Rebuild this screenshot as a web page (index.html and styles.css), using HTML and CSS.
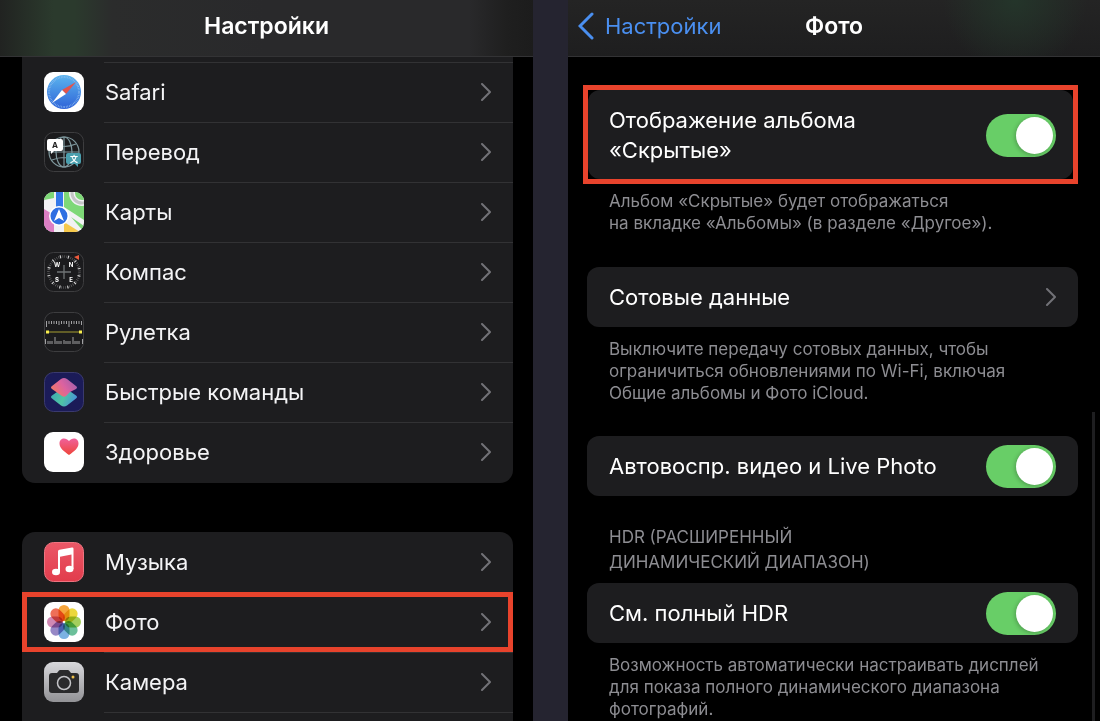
FILE: index.html
```
<!DOCTYPE html>
<html lang="ru">
<head>
    <meta charset="UTF-8">
    <meta name="viewport" content="width=device-width, initial-scale=1.0">
    <title>Настройки</title>
    <link rel="stylesheet" href="styles.css">
</head>
<body>

<section class="screen">
    <header class="navbar navbar-main">
        <h1>Настройки</h1>
    </header>
    <main class="content">
        <ul class="list list-cut">
            <li><a class="row" href="#">
                <svg class="icon" viewBox="0 0 40 40">
                    <defs><linearGradient id="safari" x2="0" y2="1"><stop stop-color="#5bb5ee"/><stop offset="1" stop-color="#2f63d8"/></linearGradient></defs>
                    <rect width="40" height="40" rx="9" fill="#fff"/>
                    <circle cx="20" cy="20" r="17" fill="url(#safari)"/>
                    <circle cx="20" cy="20" r="15" fill="none" stroke="#8fbdf0" stroke-width="2" stroke-dasharray="0.6 1"/>
                    <path d="M32 10 18 18 22 22z" fill="#e2544c"/>
                    <path d="M8 31 18 18 22 22z" fill="#fff"/>
                </svg>
                <span class="label">Safari</span>
                <svg class="chevron" viewBox="0 0 10 18"><path d="M1 1l8 8-8 8"/></svg>
            </a></li>
            <li><a class="row" href="#">
                <svg class="icon" viewBox="0 0 40 40">
                    <rect x="0.5" y="0.5" width="39" height="39" rx="9" fill="#1b1b1d" stroke="#3d3d3f"/>
                    <g fill="none" stroke="#7f989e" stroke-width="1.2">
                        <circle cx="20" cy="20" r="15"/>
                        <ellipse cx="20" cy="20" rx="8" ry="15"/>
                        <path d="M20 5v30M5 20h30M8 12q12 5 24 0M8 28q12-5 24 0"/>
                    </g>
                    <path d="M5 7h12a2 2 0 0 1 2 2v8a2 2 0 0 1-2 2h-7l-3 3v-3H5a2 2 0 0 1-2-2V9a2 2 0 0 1 2-2z" fill="#fff"/>
                    <text class="mark mark-dark" x="11" y="16">A</text>
                    <path d="M24 21h11a2 2 0 0 1 2 2v7a2 2 0 0 1-2 2h-1v3l-3-3h-7a2 2 0 0 1-2-2v-7a2 2 0 0 1 2-2z" fill="#4a9fae"/>
                    <text class="mark" x="30" y="30">文</text>
                </svg>
                <span class="label">Перевод</span>
                <svg class="chevron" viewBox="0 0 10 18"><path d="M1 1l8 8-8 8"/></svg>
            </a></li>
            <li><a class="row" href="#">
                <svg class="icon" viewBox="0 0 40 40">
                    <defs><clipPath id="tile"><rect width="40" height="40" rx="9"/></clipPath></defs>
                    <g clip-path="url(#tile)">
                        <rect width="40" height="40" fill="#f2f2f4"/>
                        <path d="M0 0h10v6L0 8z" fill="#7ed877"/>
                        <path d="M20 0h20v28L20 15z" fill="#7ed877"/>
                        <circle cx="38" cy="1" r="10" fill="none" stroke="#f2f2f4" stroke-width="6"/>
                        <circle cx="38" cy="1" r="10" fill="none" stroke="#c4c6c6" stroke-width="3"/>
                        <path d="M0 17l10 6v17H0z" fill="#dc7fc4"/>
                        <path d="M20 30l16 10H20z" fill="#f6c94c"/>
                        <path d="M27 25l13 9v6z" fill="#7ed877"/>
                        <path d="M12 0h7v18h-7z" fill="#3478e8"/>
                        <circle cx="15" cy="24" r="10" fill="#fff"/>
                        <circle cx="15" cy="24" r="8.5" fill="#2f6fe2"/>
                        <path d="M15 17l5 12-5-3-5 3z" fill="#fff"/>
                    </g>
                </svg>
                <span class="label">Карты</span>
                <svg class="chevron" viewBox="0 0 10 18"><path d="M1 1l8 8-8 8"/></svg>
            </a></li>
            <li><a class="row" href="#">
                <svg class="icon" viewBox="0 0 40 40">
                    <rect x="0.5" y="0.5" width="39" height="39" rx="9" fill="#1b1b1d" stroke="#3d3d3f"/>
                    <circle cx="20" cy="20" r="15.5" fill="none" stroke="#6c6c6e" stroke-width="2.6" stroke-dasharray="0.6 1.43"/>
                    <circle cx="20" cy="20" r="15.5" fill="none" stroke="#d8d8d8" stroke-width="3" stroke-dasharray="1 7.115" stroke-dashoffset="-3.5"/>
                    <path d="M20 13v14M13 20h14" stroke="#6f7374" stroke-width="1.3"/>
                    <path d="M35 3l0 5-5-3z" fill="#ee5a3c"/>
                    <text class="point" x="13" y="15">W</text>
                    <text class="point" x="27" y="15">N</text>
                    <text class="point" x="13" y="30">S</text>
                    <text class="point" x="27" y="30">E</text>
                </svg>
                <span class="label">Компас</span>
                <svg class="chevron" viewBox="0 0 10 18"><path d="M1 1l8 8-8 8"/></svg>
            </a></li>
            <li><a class="row" href="#">
                <svg class="icon" viewBox="0 0 40 40">
                    <rect x="0.5" y="0.5" width="39" height="39" rx="9" fill="#1b1b1d" stroke="#3d3d3f"/>
                    <path d="M2.500 9v6M5 9v3M7.500 9v3M10 9v3M12.500 9v3M15 9v4M17.500 9v3M20 9v3M22.500 9v3M25 9v6M27.500 9v3M30 9v3M32.500 9v3M35 9v3M37.500 9v4" stroke="#a2a2a4"/>
                    <path d="M1.500 27v5M4 29v3M6 29v3M8 29v3M11 25v7M13 29v3M15 29v3M17 29v3M20 28v4M22 29v3M24 29v3M26 29v3M29 25v7M31 29v3M33 29v3M35 29v3M38.500 27v5" stroke="#a2a2a4"/>
                    <path d="M3 20h34" stroke="#a8a032" stroke-width="1.2"/>
                    <rect x="2" y="18.500" width="3" height="3" fill="#f8ee4e"/>
                    <rect x="35" y="18.500" width="3" height="3" fill="#f8ee4e"/>
                </svg>
                <span class="label">Рулетка</span>
                <svg class="chevron" viewBox="0 0 10 18"><path d="M1 1l8 8-8 8"/></svg>
            </a></li>
            <li><a class="row" href="#">
                <svg class="icon" viewBox="0 0 40 40">
                    <defs>
                        <linearGradient id="cmdTop" x1="0" y1="0.7" x2="1" y2="0.2"><stop stop-color="#f07a62"/><stop offset="0.5" stop-color="#dc62a0"/><stop offset="1" stop-color="#9c5fae"/></linearGradient>
                        <linearGradient id="cmdBottom" x1="0" y1="0.3" x2="1" y2="0.6"><stop stop-color="#3fa9b0"/><stop offset="0.5" stop-color="#4fc4a4"/><stop offset="1" stop-color="#4690dc"/></linearGradient>
                    </defs>
                    <rect x="0.5" y="0.5" width="39" height="39" rx="9" fill="#1b1b58" stroke="#3a3a6e"/>
                    <path d="M18 16.500q2-1.500 4 0l10 7q2 1.500 0 3l-9 7q-3 2-6 0l-9-7q-2-1.500 0-3z" fill="url(#cmdBottom)"/>
                    <path d="M17 7q3-2 6 0l9 7q2 1.500 0 3l-6 3-4 4q-2 1.500-4 0l-10-7q-2-1.500 0-3z" fill="url(#cmdTop)"/>
                </svg>
                <span class="label">Быстрые команды</span>
                <svg class="chevron" viewBox="0 0 10 18"><path d="M1 1l8 8-8 8"/></svg>
            </a></li>
            <li><a class="row" href="#">
                <svg class="icon" viewBox="0 0 40 40">
                    <defs><linearGradient id="heart" x2="0" y2="1"><stop stop-color="#f0619c"/><stop offset="1" stop-color="#ee4539"/></linearGradient></defs>
                    <rect width="40" height="40" rx="9" fill="#fff"/>
                    <path d="M25 23c-5-3.500-9.500-7-9.500-11.500C15.500 5.500 22 5 25 9c3-4 9.500-3.500 9.500 2.500C34.500 16 30 19.500 25 23z" fill="url(#heart)"/>
                </svg>
                <span class="label">Здоровье</span>
                <svg class="chevron" viewBox="0 0 10 18"><path d="M1 1l8 8-8 8"/></svg>
            </a></li>
        </ul>

        <ul class="list list-open">
            <li><a class="row" href="#">
                <svg class="icon" viewBox="0 0 40 40">
                    <defs><linearGradient id="music" x2="0" y2="1"><stop stop-color="#ea5867"/><stop offset="1" stop-color="#e23c4c"/></linearGradient></defs>
                    <rect x="0.5" y="0.5" width="39" height="39" rx="9" fill="url(#music)" stroke="#ee7480"/>
                    <path d="M14 9.500q0-1.500 1.500-1.800L28 5.500q1.500-0.200 1.500 1.200V27h-2V12.500L16 14.800V30h-2z" fill="#fff"/>
                    <ellipse cx="12" cy="30" rx="4" ry="3.200" fill="#fff"/>
                    <ellipse cx="25.500" cy="27" rx="4" ry="3.200" fill="#fff"/>
                </svg>
                <span class="label">Музыка</span>
                <svg class="chevron" viewBox="0 0 10 18"><path d="M1 1l8 8-8 8"/></svg>
            </a></li>
            <li><a class="row marked" href="#">
                <svg class="icon" viewBox="0 0 40 40">
                    <rect width="40" height="40" rx="9" fill="#fff"/>
                    <g class="petals">
                        <rect x="14.500" y="3" width="11" height="16" rx="5.500" fill="#f6a53c"/>
                        <rect x="14.500" y="3" width="11" height="16" rx="5.500" fill="#ecd73c" transform="rotate(45 20 20)"/>
                        <rect x="14.500" y="3" width="11" height="16" rx="5.500" fill="#a4cf5c" transform="rotate(90 20 20)"/>
                        <rect x="14.500" y="3" width="11" height="16" rx="5.500" fill="#6cc09a" transform="rotate(135 20 20)"/>
                        <rect x="14.500" y="3" width="11" height="16" rx="5.500" fill="#7cb2e2" transform="rotate(180 20 20)"/>
                        <rect x="14.500" y="3" width="11" height="16" rx="5.500" fill="#9688c6" transform="rotate(225 20 20)"/>
                        <rect x="14.500" y="3" width="11" height="16" rx="5.500" fill="#d089b4" transform="rotate(270 20 20)"/>
                        <rect x="14.500" y="3" width="11" height="16" rx="5.500" fill="#ee6f58" transform="rotate(315 20 20)"/>
                    </g>
                </svg>
                <span class="label">Фото</span>
                <svg class="chevron" viewBox="0 0 10 18"><path d="M1 1l8 8-8 8"/></svg>
            </a></li>
            <li><a class="row" href="#">
                <svg class="icon" viewBox="0 0 40 40">
                    <defs><linearGradient id="camera" x2="0" y2="1"><stop stop-color="#d8d8dc"/><stop offset="1" stop-color="#929296"/></linearGradient></defs>
                    <rect width="40" height="40" rx="9" fill="url(#camera)"/>
                    <path d="M8 11h5l2-2.500q0.500-0.500 1-0.500h8q0.500 0 1 0.500L27 11h5q3 0 3 3v14q0 3-3 3H8q-3 0-3-3V14q0-3 3-3z" fill="#2a2a2c"/>
                    <circle cx="20" cy="21" r="6.500" fill="#2a2a2c" stroke="#c4c4c8" stroke-width="1.500"/>
                    <circle cx="29" cy="15" r="1.500" fill="#eec04c"/>
                </svg>
                <span class="label">Камера</span>
                <svg class="chevron" viewBox="0 0 10 18"><path d="M1 1l8 8-8 8"/></svg>
            </a></li>
            <li class="row"></li>
        </ul>
    </main>
</section>

<section class="screen">
    <header class="navbar navbar-photo">
        <a class="back" href="#">
            <svg class="back-arrow" viewBox="0 0 16 28"><path d="M14 2L2 14l12 12"/></svg>
            Настройки
        </a>
        <h2>Фото</h2>
    </header>
    <main class="content options">
        <div class="frame">
            <label class="card card-tall">
                <span>Отображение альбома «Скрытые»</span>
                <input class="toggle" type="checkbox" checked>
            </label>
        </div>
        <p class="note">Альбом «Скрытые» будет отображаться<br>на вкладке «Альбомы» (в разделе «Другое»).</p>

        <a class="card" href="#">
            <span>Сотовые данные</span>
            <svg class="chevron" viewBox="0 0 10 18"><path d="M1 1l8 8-8 8"/></svg>
        </a>
        <p class="note note-low">Выключите передачу сотовых данных, чтобы ограничиться обновлениями по Wi-Fi, включая Общие альбомы и Фото iCloud.</p>

        <label class="card">
            <span>Автовоспр. видео и Live Photo</span>
            <input class="toggle" type="checkbox" checked>
        </label>

        <h3 class="caption">HDR (РАСШИРЕННЫЙ<br>ДИНАМИЧЕСКИЙ ДИАПАЗОН)</h3>
        <label class="card">
            <span>См. полный HDR</span>
            <input class="toggle" type="checkbox" checked>
        </label>
        <p class="note note-low">Возможность автоматически настраивать дисплей для показа полного динамического диапазона фотографий.</p>
    </main>
    <div class="scrollbar"></div>
</section>

</body>
</html>
```
FILE: styles.css
```
* {
    margin: 0;
    padding: 0;
    box-sizing: border-box;
}
body {
    display: grid;
    grid-template-columns: 533fr 532fr;
    gap: 35px;
    height: 100vh;
    overflow: hidden;
    background: #252430;
    color: #f4f4f6;
    font-family: Inter, "Noto Sans CJK SC", sans-serif;
    font-size: 22px;
    line-height: 30px;
}
a {
    color: inherit;
    text-decoration: none;
}
.screen {
    position: relative;
    background: #000;
    overflow: hidden;
}

/* top bars */
.navbar {
    display: grid;
    grid-template-columns: 1fr auto 1fr;
    align-items: center;
    height: 57px;
    padding: 0 10px 5px;
    border-bottom: 1px solid #333335;
}
.navbar-main {
    background: linear-gradient(90deg, #212321 0, #2b3a2d 10%, #2b3a2d 14%, #2b2c2c 21%, #29292b 50%, #29292b 88%, #1f1f1f 95%, #1c1c1c 100%);
}
.navbar-photo {
    background: radial-gradient(circle at 84% 0, #24352a 0, transparent 16%), linear-gradient(#242424, #1e1e1f);
}
.navbar h1,
.navbar h2 {
    grid-column: 2;
    color: #fff;
    font-size: 23px;
    font-weight: 600;
}
.back {
    display: flex;
    align-items: center;
    gap: 11px;
    color: #4a8ff0;
}
.back-arrow {
    width: 16px;
    height: 28px;
    fill: none;
    stroke: currentColor;
    stroke-width: 3;
    stroke-linecap: round;
}

/* app list */
.list {
    margin: 0 20px 49px 22px;
    border-radius: 13px;
    background: #1d1d1f;
    list-style: none;
}
.list-cut {
    padding: 5px 0 1px;
    border-radius: 0 0 13px 13px;
}
.list-open {
    border-radius: 13px 13px 0 0;
}
.row {
    display: flex;
    align-items: center;
    height: 60px;
    padding: 0 22px;
    background: linear-gradient(#323234, #323234) 82px 0 / 100% 1px no-repeat;
}
.list-open li:first-child .row {
    background: none;
}
.list-open .marked {
    background: none;
    outline: 5px solid #e8432c;
    outline-offset: -5px;
}
.icon {
    width: 40px;
    height: 40px;
    margin-right: 21px;
}
.label {
    flex: 1;
}
.chevron {
    width: 10px;
    height: 18px;
    fill: none;
    stroke: #727277;
    stroke-width: 2;
    stroke-linecap: round;
    stroke-linejoin: round;
}
.mark,
.point {
    fill: #fff;
    font-size: 8px;
    font-weight: 700;
    line-height: 8px;
    text-anchor: middle;
}
.mark-dark {
    fill: #222;
}
.point {
    font-size: 6px;
}
.petals {
    isolation: isolate;
}
.petals rect {
    mix-blend-mode: multiply;
}

/* photo options */
.options {
    padding: 28px 22px 0 19px;
}
.frame {
    margin-left: -4px;
    border: 5px solid #e8432c;
}
.card {
    display: flex;
    align-items: center;
    justify-content: space-between;
    min-height: 60px;
    padding: 0 22px;
    border-radius: 12px;
    background: #1d1d1f;
    color: #fff;
}
.card-tall {
    min-height: 89px;
    padding: 1px 17px 0 21px;
}
.card-tall span {
    max-width: 300px;
}
.toggle {
    appearance: none;
    display: flex;
    justify-content: flex-end;
    width: 70px;
    height: 43px;
    padding: 3px;
    border-radius: 22px;
    background: #68ce67;
}
.toggle::before {
    content: "";
    width: 37px;
    height: 37px;
    border-radius: 50%;
    background: #fff;
    box-shadow: -1px 1px 4px rgba(0, 0, 0, 0.25);
}
.toggle:not(:checked) {
    justify-content: flex-start;
    background: #39393d;
}
.note {
    padding: 6px 0 33px 22px;
    color: #8d8d92;
    font-size: 17px;
    line-height: 22px;
}
.note-low {
    padding: 11px 16px 32px 22px;
}
.caption {
    padding: 29px 22px 8px;
    color: #8d8d92;
    font-size: 17px;
    font-weight: 400;
    line-height: 25px;
}
.scrollbar {
    position: absolute;
    top: 412px;
    right: 5px;
    bottom: 0;
    width: 3px;
    background: #1e1e20;
}
```
